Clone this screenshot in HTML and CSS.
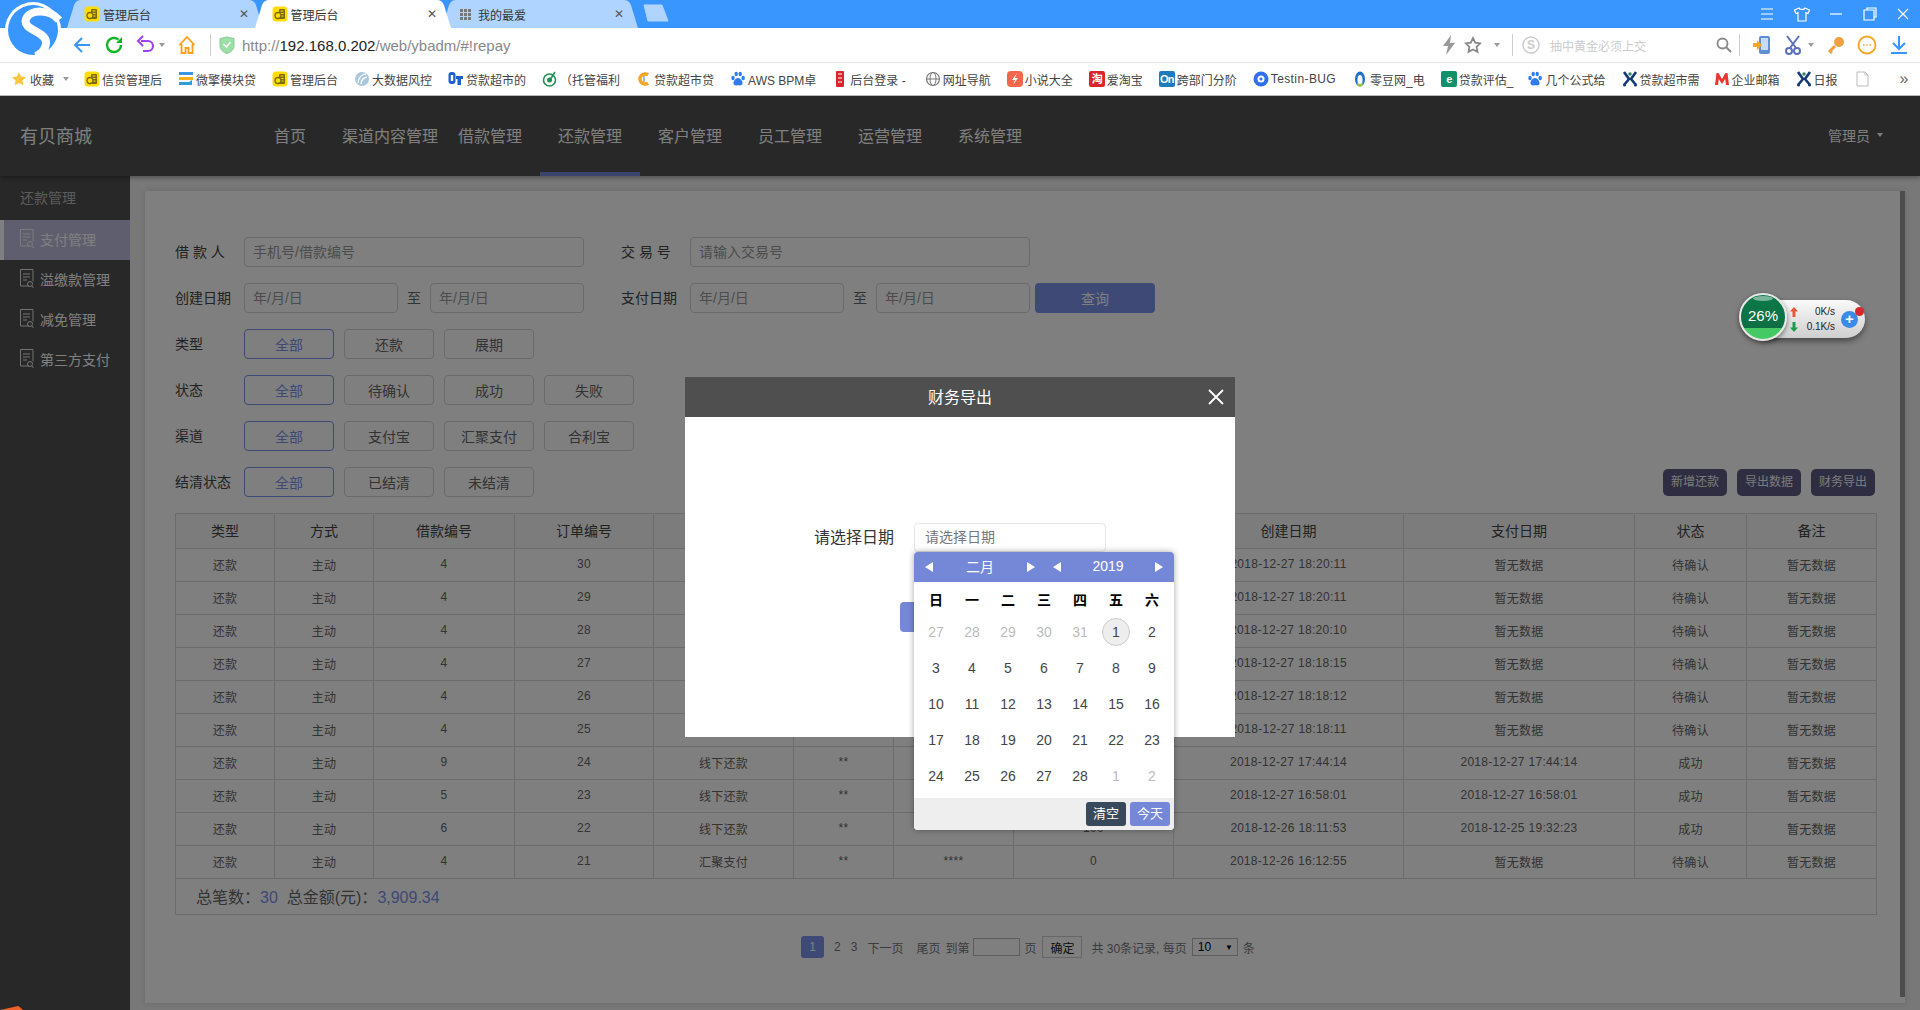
FILE: index.html
```html
<!DOCTYPE html>
<html lang="zh-CN">
<head>
	<meta charset="UTF-8">
	<title>管理后台</title>
	<link rel="stylesheet" href="styles.css">
</head>
<body>
	<svg class="defs" width="0" height="0">
		<symbol id="coin" viewBox="0 0 16 16"><rect x="0.5" y="0.5" width="15" height="15" rx="3.5" fill="#ffdd00"/><rect x="7" y="3" width="6" height="10" rx="1" fill="#7a6a10"/><path d="M8.5 5h3M8.5 7.5h3M8.5 10h3" stroke="#ffdd00"/><circle cx="6" cy="9.500" r="3" fill="#ffdd00" stroke="#7a6a10" stroke-width="1.300"/></symbol>
		<symbol id="paw" viewBox="0 0 16 16"><g fill="#2f7bf0"><ellipse cx="3" cy="7" rx="1.700" ry="2.200"/><ellipse cx="6.200" cy="3" rx="1.700" ry="2.200"/><ellipse cx="10.200" cy="3" rx="1.700" ry="2.200"/><ellipse cx="13.200" cy="7" rx="1.700" ry="2.200"/><path d="M8 7c-2.500 0-5 3.500-4.500 5.500C4 15 6.500 14.300 8 14.300s4 .7 4.500-1.800C13 10.500 10.500 7 8 7z"/></g></symbol>
		<symbol id="xman" viewBox="0 0 16 16"><path d="M2 1l5 7-5 6M14 1L9 8l5 6" fill="none" stroke="#123a78" stroke-width="2.600"/><circle cx="8" cy="3" r="1.800" fill="#3a8a6a"/><circle cx="2.500" cy="14" r="1.500" fill="#123a78"/><circle cx="13.500" cy="14" r="1.500" fill="#123a78"/></symbol>
		<symbol id="cai" viewBox="0 0 16 16"><path d="M3 1h8l3 3v11H3z" fill="#fff" stroke="#bbb"/><path d="M11 1v3h3" fill="none" stroke="#bbb"/></symbol>
		<symbol id="docs" viewBox="0 0 14 20"><path d="M9 17H.5V.5h12.500v12" fill="none" stroke="#fff" stroke-opacity=".85"/><path d="M3 5h7M3 8h7M3 11h4" stroke="#fff" stroke-opacity=".85"/><circle cx="10" cy="15" r="2.500" fill="none" stroke="#fff" stroke-opacity=".85"/><path d="M12 17l1.500 2" stroke="#fff" stroke-opacity=".85"/></symbol>
	</svg>

	<!-- 浏览器外框 -->
	<svg class="logo" width="60" height="58" viewBox="0 0 60 58">
		<circle cx="29" cy="29" r="28" fill="#fff"/>
		<circle cx="29" cy="29" r="25" fill="#3a96ff"/>
		<path d="M55 19C46 8 26 8 22 18c-4 12 22 12 20 25-1 6-6 10-10 12" fill="none" stroke="#fff" stroke-width="8"/>
	</svg>
	<div class="tabbar">
		<div class="tab">
			<svg class="tab-shape" viewBox="0 0 194 28" preserveAspectRatio="none"><path d="M0 28L7 5Q9 0 14 0H180Q185 0 187 5L194 28Z" fill="#aed4ff"/></svg>
			<svg class="tab-ic" width="16" height="16"><use href="#coin"/></svg><span class="tab-name">管理后台</span><span class="tab-x">✕</span>
		</div>
		<div class="tab tab-on">
			<svg class="tab-shape" viewBox="0 0 194 28" preserveAspectRatio="none"><path d="M0 28L7 5Q9 0 14 0H180Q185 0 187 5L194 28Z" fill="#fff"/></svg>
			<svg class="tab-ic" width="16" height="16"><use href="#coin"/></svg><span class="tab-name">管理后台</span><span class="tab-x">✕</span>
		</div>
		<div class="tab">
			<svg class="tab-shape" viewBox="0 0 194 28" preserveAspectRatio="none"><path d="M0 28L7 5Q9 0 14 0H180Q185 0 187 5L194 28Z" fill="#aed4ff"/></svg>
			<svg class="tab-ic" width="16" height="16" viewBox="0 0 16 16"><path d="M1 3h3v3H1zM5 3h3v3H5zM9 3h3v3H9zM1 7h3v3H1zM5 7h3v3H5zM9 7h3v3H9zM1 11h3v3H1zM5 11h3v3H5zM9 11h3v3H9z" fill="#777"/></svg><span class="tab-name">我的最爱</span><span class="tab-x">✕</span>
		</div>
		<svg class="tab-new" width="28" height="18" viewBox="0 0 28 18"><path d="M2 1h18l6 16H6z" fill="#aed4ff" stroke="#aed4ff" stroke-linejoin="round"/></svg>
		<div class="win-btns">
			<svg width="16" height="16" viewBox="0 0 16 16"><path d="M2 3h12M2 8h12M2 13h12" stroke="#fff" stroke-width="1.200"/></svg>
			<svg width="18" height="16" viewBox="0 0 18 16"><path d="M6 2L1.500 4 3 7.500l2-.8V15h8V6.700l2 .8L16.500 4 12 2c-.5 2-5.500 2-6 0z" fill="none" stroke="#fff" stroke-width="1.200"/></svg>
			<svg width="16" height="16" viewBox="0 0 16 16"><path d="M2 8h12" stroke="#fff" stroke-width="1.200"/></svg>
			<svg width="16" height="16" viewBox="0 0 16 16"><path d="M5 4V2h9v9h-2M2 4h10v10H2z" fill="none" stroke="#fff" stroke-width="1.200"/></svg>
			<svg width="16" height="16" viewBox="0 0 16 16"><path d="M3 3l10 10M13 3L3 13" stroke="#fff" stroke-width="1.200"/></svg>
		</div>
	</div>
	<div class="toolbar">
		<svg class="ic-back" width="20" height="20" viewBox="0 0 20 20"><path d="M10 3L3 10l7 7M3 10h15" fill="none" stroke="#3a96ff" stroke-width="2"/></svg>
		<svg class="ic-next" width="20" height="20" viewBox="0 0 20 20"><path d="M17 10a7 7 0 1 1-2.500-5.400" fill="none" stroke="#12b524" stroke-width="2.400"/><path d="M18 2v6h-6z" fill="#12b524"/></svg>
		<svg class="ic-next" width="20" height="20" viewBox="0 0 20 20"><path d="M5 6h7a5 5 0 0 1 0 10H7" fill="none" stroke="#a040f0" stroke-width="2.200"/><path d="M7 1L2 6l5 5" fill="none" stroke="#a040f0" stroke-width="2"/></svg>
		<span class="caret caret-undo"></span>
		<svg class="ic-home" width="20" height="20" viewBox="0 0 20 20"><path d="M2.500 10L10 2l7.500 8M4.500 9v9h4v-5h3v5h4V9" fill="none" stroke="#ff9d14" stroke-width="1.800"/></svg>
		<span class="tool-line line-url"></span>
		<svg class="ic-shield" width="16" height="18" viewBox="0 0 16 18"><path d="M1 2.500L8 1l7 1.500V10c0 4-4 6.500-7 7.500C5 16.500 1 14 1 10z" fill="#9adfa5" stroke="#8cc99a"/><path d="M4.500 8l3 3 4-5" fill="none" stroke="#fff" stroke-width="1.600"/></svg>
		<span class="url">http://<b>192.168.0.202</b>/web/ybadm/#!repay</span>
		<svg class="ic-bolt" width="14" height="20" viewBox="0 0 14 20"><path d="M9 0L1 11h5l-2 9 9-12H8z" fill="#999"/></svg>
		<svg class="ic-star" width="18" height="18" viewBox="0 0 18 18"><path d="M9 2l2.200 4.600 5 .7-3.600 3.500.9 5L9 13.400l-4.500 2.400.9-5L1.800 7.300l5-.7z" fill="none" stroke="#888" stroke-width="1.800"/></svg>
		<span class="caret caret-star"></span>
		<span class="tool-line line-search"></span>
		<svg class="ic-s" width="18" height="18" viewBox="0 0 18 18"><circle cx="9" cy="9" r="8" fill="none" stroke="#ccc" stroke-width="1.500"/><text x="9" y="13" font-size="12" text-anchor="middle" fill="#ccc" font-weight="700">S</text></svg>
		<span class="search-tip">抽中黄金必须上交</span>
		<svg class="ic-find" width="16" height="16" viewBox="0 0 16 16"><circle cx="6.500" cy="6.500" r="5" fill="none" stroke="#888" stroke-width="1.800"/><path d="M10 10l5 5" stroke="#888" stroke-width="2"/></svg>
		<span class="tool-line line-tools"></span>
		<svg class="ic-phone" width="18" height="18" viewBox="0 0 18 18"><rect x="6" y="0" width="11" height="18" rx="2" fill="#5f8fd0"/><rect x="8" y="2" width="7" height="12" fill="#c8dcf5"/><path d="M0 7h4V4l5 5-5 5v-3H0z" fill="#f5a623"/></svg>
		<svg class="ic-cut" width="16" height="20" viewBox="0 0 16 20"><path d="M2 1l9 12M14 1L5 13" stroke="#5a6fc0" stroke-width="2"/><circle cx="4" cy="16" r="3" fill="none" stroke="#5a6fc0" stroke-width="2"/><circle cx="12" cy="16" r="3" fill="none" stroke="#5a6fc0" stroke-width="2"/></svg>
		<span class="caret caret-cut"></span>
		<svg class="ic-key" width="18" height="18" viewBox="0 0 18 18"><circle cx="12" cy="6" r="5" fill="#f0a040"/><path d="M8 10l-6 6M3 15l2 2" stroke="#f0a040" stroke-width="3"/></svg>
		<svg class="ic-more" width="20" height="20" viewBox="0 0 20 20"><circle cx="10" cy="10" r="8.500" fill="none" stroke="#f5a623" stroke-width="1.800"/><path d="M6 10h1.500M9.300 10h1.500M12.600 10h1.500" stroke="#f5a623" stroke-width="1.600"/></svg>
		<svg class="ic-down" width="18" height="20" viewBox="0 0 18 20"><path d="M9 1v13M3 8l6 6 6-6M1 18h16" fill="none" stroke="#3a96ff" stroke-width="2"/></svg>
	</div>
	<div class="bookmarks">
		<span class="bm-fav"><svg width="14" height="14" viewBox="0 0 18 18"><path d="M9 0l2.700 5.800 6.300.8-4.600 4.300 1.200 6.100L9 14l-5.600 3 1.200-6.100L0 6.600l6.300-.8z" fill="#ffc53d"/></svg>收藏<span class="caret caret-fav"></span></span>
		<span class="bm"><svg width="16" height="16"><use href="#coin"/></svg>信贷管理后</span>
		<span class="bm"><svg width="16" height="16" viewBox="0 0 16 16"><path d="M1 1h14v3H1z" fill="#3a96e0"/><path d="M1 6h14v3H1z" fill="#f5b020"/><path d="M1 11h10l3-2v5H1z" fill="#2f9fd8"/></svg>微擎模块贷</span>
		<span class="bm"><svg width="16" height="16"><use href="#coin"/></svg>管理后台</span>
		<span class="bm"><svg width="16" height="16" viewBox="0 0 16 16"><circle cx="8" cy="8" r="7" fill="#a9c6df"/><path d="M4 12C4 7 8 3 12 3M7 13c0-4 2-6 6-7" fill="none" stroke="#fff" stroke-width="1.400"/></svg>大数据风控</span>
		<span class="bm"><svg width="16" height="16" viewBox="0 0 16 16"><rect x="0.500" y="1" width="7" height="12" rx="3" fill="#1c5fd0"/><path d="M8 5h7v3h-2v6H9.500V8H8z" fill="#1c5fd0"/><rect x="2.800" y="4" width="2.400" height="6" fill="#fff"/></svg>贷款超市的</span>
		<span class="bm"><svg width="16" height="16" viewBox="0 0 16 16"><circle cx="7.500" cy="9" r="6" fill="none" stroke="#1f8f4f" stroke-width="1.600"/><circle cx="7.500" cy="9" r="2.500" fill="#1f8f4f"/><path d="M8 9l5-8" stroke="#1f8f4f" stroke-width="1.500"/></svg>（托管福利</span>
		<span class="bm"><svg width="16" height="16" viewBox="0 0 16 16"><path d="M12 4a5 5 0 1 0 0 8" fill="none" stroke="#f5a623" stroke-width="3.600"/><path d="M8 5v6" stroke="#3a7ad0"/></svg>贷款超市贷</span>
		<span class="bm"><svg width="16" height="16"><use href="#paw"/></svg>AWS BPM卓</span>
		<span class="bm bm-wide"><svg width="16" height="16" viewBox="0 0 16 16"><rect x="4" y="0" width="8" height="16" rx="1" fill="#d8262c"/><path d="M6 3h4M6 7h4M6 11h4" stroke="#fff"/></svg>后台登录 -</span>
		<span class="bm"><svg width="16" height="16" viewBox="0 0 16 16"><circle cx="8" cy="8" r="6.500" fill="none" stroke="#777" stroke-width="1.200"/><ellipse cx="8" cy="8" rx="3" ry="6.500" fill="none" stroke="#777"/><path d="M1.500 8h13" stroke="#777"/></svg>网址导航</span>
		<span class="bm"><svg width="16" height="16" viewBox="0 0 16 16"><rect width="16" height="16" rx="4" fill="#f5664a"/><path d="M10 2L5 9h3l-2 5 5-7H8z" fill="#fff"/></svg>小说大全</span>
		<span class="bm"><span class="bm-chip chip-tao">淘</span>爱淘宝</span>
		<span class="bm"><span class="bm-chip chip-on">On</span>跨部门分阶</span>
		<span class="bm bm-latin"><svg width="16" height="16" viewBox="0 0 16 16"><circle cx="8" cy="8" r="7.500" fill="#2f6ff0"/><circle cx="8" cy="8" r="3.500" fill="#fff"/><circle cx="8" cy="8" r="1.500" fill="#2f6ff0"/></svg>Testin-BUG</span>
		<span class="bm"><svg width="16" height="16" viewBox="0 0 16 16"><ellipse cx="8" cy="8" rx="5" ry="7.500" fill="#1f6fd0"/><ellipse cx="8" cy="9" rx="2.500" ry="5" fill="#fff"/><path d="M8 16c-2-1-3-2-3-4 1 1 5 1 6 0 0 2-1 3-3 4z" fill="#9bc53d"/></svg>零豆网_电</span>
		<span class="bm bm-tight"><span class="bm-chip chip-eval">e</span>贷款评估_</span>
		<span class="bm"><svg width="16" height="16"><use href="#paw"/></svg>几个公式给</span>
		<span class="bm bm-tight"><svg width="16" height="16"><use href="#xman"/></svg>贷款超市需</span>
		<span class="bm"><svg width="16" height="16" viewBox="0 0 16 16"><path d="M1 14l1.500-12h2L8 8l3.500-6h2L15 14h-3l-.8-6L8 13 4.800 8 4 14z" fill="#e8352e"/></svg>企业邮箱</span>
		<span class="bm"><svg width="16" height="16"><use href="#xman"/></svg>日报</span>
		<span class="bm"><svg width="16" height="16"><use href="#cai"/></svg></span>
		<span class="bm-more">»</span>
	</div>

	<!-- 页面 -->
	<div class="app">
		<div class="topnav">
			<div class="brand">有贝商城</div>
			<ul class="nav">
				<li>首页</li>
				<li>渠道内容管理</li>
				<li>借款管理</li>
				<li class="on">还款管理</li>
				<li>客户管理</li>
				<li>员工管理</li>
				<li>运营管理</li>
				<li>系统管理</li>
			</ul>
			<div class="admin">管理员<span class="caret caret-admin"></span></div>
		</div>
		<div class="main">
			<div class="side">
				<div class="side-title">还款管理</div>
				<div class="side-item on"><svg width="14" height="20"><use href="#docs"/></svg>支付管理</div>
				<div class="side-item"><svg width="14" height="20"><use href="#docs"/></svg>溢缴款管理</div>
				<div class="side-item"><svg width="14" height="20"><use href="#docs"/></svg>减免管理</div>
				<div class="side-item"><svg width="14" height="20"><use href="#docs"/></svg>第三方支付</div>
			</div>
			<div class="card">
				<div class="card-in">
					<div class="row">
						<label class="lab">借 款 人</label>
						<input class="ipt ipt-long" placeholder="手机号/借款编号">
						<label class="lab lab-right">交 易 号</label>
						<input class="ipt ipt-long" placeholder="请输入交易号">
					</div>
					<div class="row">
						<label class="lab">创建日期</label>
						<input class="ipt ipt-date" placeholder="年/月/日">
						<span class="to">至</span>
						<input class="ipt ipt-date" placeholder="年/月/日">
						<label class="lab lab-right">支付日期</label>
						<input class="ipt ipt-date" placeholder="年/月/日">
						<span class="to">至</span>
						<input class="ipt ipt-date" placeholder="年/月/日">
						<button class="search">查询</button>
					</div>
					<div class="row">
						<label class="lab">类型</label>
						<span class="opt on">全部</span><span class="opt">还款</span><span class="opt">展期</span>
					</div>
					<div class="row">
						<label class="lab">状态</label>
						<span class="opt on">全部</span><span class="opt">待确认</span><span class="opt">成功</span><span class="opt">失败</span>
					</div>
					<div class="row">
						<label class="lab">渠道</label>
						<span class="opt on">全部</span><span class="opt">支付宝</span><span class="opt">汇聚支付</span><span class="opt">合利宝</span>
					</div>
					<div class="row">
						<label class="lab">结清状态</label>
						<span class="opt on">全部</span><span class="opt">已结清</span><span class="opt">未结清</span>
						<div class="acts">
							<span class="act">新增还款</span><span class="act">导出数据</span><span class="act">财务导出</span>
						</div>
					</div>
					<table class="list">
						<colgroup>
							<col class="c99"><col class="c99"><col class="c141"><col class="c139"><col class="c140"><col class="c100"><col class="c120"><col class="c160"><col class="c230"><col class="c231"><col class="c112"><col class="c130">
						</colgroup>
						<thead>
							<tr><th>类型</th><th>方式</th><th>借款编号</th><th>订单编号</th><th></th><th></th><th></th><th></th><th>创建日期</th><th>支付日期</th><th>状态</th><th>备注</th></tr>
						</thead>
						<tbody>
							<tr><td>还款</td><td>主动</td><td>4</td><td>30</td><td></td><td></td><td></td><td></td><td>2018-12-27 18:20:11</td><td>暂无数据</td><td>待确认</td><td>暂无数据</td></tr>
							<tr><td>还款</td><td>主动</td><td>4</td><td>29</td><td></td><td></td><td></td><td></td><td>2018-12-27 18:20:11</td><td>暂无数据</td><td>待确认</td><td>暂无数据</td></tr>
							<tr><td>还款</td><td>主动</td><td>4</td><td>28</td><td></td><td></td><td></td><td></td><td>2018-12-27 18:20:10</td><td>暂无数据</td><td>待确认</td><td>暂无数据</td></tr>
							<tr><td>还款</td><td>主动</td><td>4</td><td>27</td><td></td><td></td><td></td><td></td><td>2018-12-27 18:18:15</td><td>暂无数据</td><td>待确认</td><td>暂无数据</td></tr>
							<tr><td>还款</td><td>主动</td><td>4</td><td>26</td><td></td><td></td><td></td><td></td><td>2018-12-27 18:18:12</td><td>暂无数据</td><td>待确认</td><td>暂无数据</td></tr>
							<tr><td>还款</td><td>主动</td><td>4</td><td>25</td><td></td><td></td><td></td><td></td><td>2018-12-27 18:18:11</td><td>暂无数据</td><td>待确认</td><td>暂无数据</td></tr>
							<tr><td>还款</td><td>主动</td><td>9</td><td>24</td><td>线下还款</td><td>**</td><td></td><td></td><td>2018-12-27 17:44:14</td><td>2018-12-27 17:44:14</td><td>成功</td><td>暂无数据</td></tr>
							<tr><td>还款</td><td>主动</td><td>5</td><td>23</td><td>线下还款</td><td>**</td><td></td><td></td><td>2018-12-27 16:58:01</td><td>2018-12-27 16:58:01</td><td>成功</td><td>暂无数据</td></tr>
							<tr><td>还款</td><td>主动</td><td>6</td><td>22</td><td>线下还款</td><td>**</td><td></td><td>100</td><td>2018-12-26 18:11:53</td><td>2018-12-25 19:32:23</td><td>成功</td><td>暂无数据</td></tr>
							<tr><td>还款</td><td>主动</td><td>4</td><td>21</td><td>汇聚支付</td><td>**</td><td>****</td><td>0</td><td>2018-12-26 16:12:55</td><td>暂无数据</td><td>待确认</td><td>暂无数据</td></tr>
							<tr class="sum"><td colspan="12">总笔数：<em>30</em>&nbsp;&nbsp;总金额(元)：<em>3,909.34</em></td></tr>
						</tbody>
					</table>
					<div class="pager">
						<span class="pg-cur">1</span><span class="pg-2">2</span><span class="pg-3">3</span><span class="pg-next">下一页</span><span class="pg-last">尾页</span><span class="pg-go">到第</span><input class="pg-ipt"><span class="pg-unit">页</span><button class="pg-ok">确定</button><span class="pg-info">共 30条记录, 每页</span><div class="pg-sel">10<span class="pg-arrow">▼</span></div><span class="pg-unit">条</span>
					</div>
				</div>
				<div class="scroll"></div>
			</div>
		</div>

		<div class="mask"></div>
		<div class="modal">
			<div class="modal-head">财务导出<svg class="modal-x" width="16" height="16" viewBox="0 0 16 16"><path d="M1 1l14 14M15 1L1 15" stroke="#fff" stroke-width="1.800"/></svg></div>
			<div class="modal-row">
				<label class="modal-lab">请选择日期</label>
				<input class="modal-ipt" placeholder="请选择日期">
			</div>
			<div class="modal-ok"></div>
			<div class="cal">
				<div class="cal-head">
					<span class="tri-l"></span><span class="cal-val">二月</span><span class="tri-r"></span>
					<span class="tri-l"></span><span class="cal-val">2019</span><span class="tri-r"></span>
				</div>
				<div class="cal-week"><span>日</span><span>一</span><span>二</span><span>三</span><span>四</span><span>五</span><span>六</span></div>
				<div class="cal-days">
					<span class="off">27</span><span class="off">28</span><span class="off">29</span><span class="off">30</span><span class="off">31</span><span class="today">1</span><span>2</span>
					<span>3</span><span>4</span><span>5</span><span>6</span><span>7</span><span>8</span><span>9</span>
					<span>10</span><span>11</span><span>12</span><span>13</span><span>14</span><span>15</span><span>16</span>
					<span>17</span><span>18</span><span>19</span><span>20</span><span>21</span><span>22</span><span>23</span>
					<span>24</span><span>25</span><span>26</span><span>27</span><span>28</span><span class="off">1</span><span class="off">2</span>
				</div>
				<div class="cal-foot"><span class="cal-clear">清空</span><span class="cal-now">今天</span></div>
			</div>
		</div>
		<div class="wedge"></div>
	</div>

	<!-- 桌面悬浮球 -->
	<div class="ball">
		<div class="ball-pill">
			<div class="ball-arrows">
				<svg width="8" height="10" viewBox="0 0 8 10"><path d="M4 0l4 4.500H5.500V10h-3V4.500H0z" fill="#e8583a"/></svg>
				<svg width="8" height="10" viewBox="0 0 8 10"><path d="M4 10l4-4.500H5.500V0h-3v5.500H0z" fill="#1f9a50"/></svg>
			</div>
			<div class="ball-speed"><span>0K/s</span><span>0.1K/s</span></div>
			<div class="ball-plus">+</div>
			<div class="ball-dot"></div>
		</div>
		<div class="ball-round"><div class="ball-shine"></div><span class="ball-num">26%</span></div>
	</div>
</body>
</html>
```
FILE: styles.css
```css
*{
	margin: 0;
	padding: 0;
	box-sizing: border-box;
}
html,body{
	width: 1920px;
	height: 1010px;
	overflow: hidden;
}
body{
	position: relative;
	font-family: "Liberation Sans","Noto Sans CJK SC",sans-serif;
	font-size: 14px;
	color: #666;
	background-color: #fff;
}
ul{
	list-style: none;
}
.defs{
	position: absolute;
}
.caret{
	display: block;
	width: 0;
	height: 0;
	border-left: 3.5px solid transparent;
	border-right: 3.5px solid transparent;
	border-top: 4px solid #999;
}

/* browser chrome */
.logo{
	position: absolute;
	left: 4px;
	top: 1px;
	z-index: 5;
}
.tabbar{
	height: 28px;
	padding-left: 67px;
	background-color: #3a96ff;
	display: flex;
}
.tab{
	position: relative;
	width: 196px;
	height: 28px;
	margin-right: -8.5px;
	padding-left: 17px;
	display: flex;
	align-items: center;
	font-size: 12px;
	color: #333;
}
.tab-on{
	z-index: 1;
}
.tab-shape{
	position: absolute;
	left: 0;
	top: 0;
	width: 100%;
	height: 100%;
}
.tab-ic,.tab-name,.tab-x{
	position: relative;
}
.tab-name{
	margin-left: 3px;
}
.tab-x{
	margin-left: auto;
	margin-right: 14px;
	font-size: 12px;
	color: #555;
}
.tab-new{
	margin: 4px 0 0 12px;
}
.win-btns{
	margin-left: auto;
	width: 161px;
	padding: 6px 9px 0 0;
	display: flex;
	justify-content: space-between;
	height: 22px;
}
.toolbar{
	height: 34px;
	padding-left: 72px;
	display: flex;
	align-items: center;
	background-color: #fff;
}
.ic-next{
	margin-left: 12px;
}
.caret-undo{
	margin-left: 3px;
}
.ic-home{
	margin-left: 12px;
}
.tool-line{
	width: 1px;
	height: 22px;
	background-color: #ccc;
}
.line-url{
	margin-left: 13px;
}
.ic-shield{
	margin-left: 8px;
}
.url{
	margin-left: 7px;
	width: 1190px;
	padding-top: 1px;
	font-size: 15px;
	color: #888;
}
.url b{
	font-weight: normal;
	color: #222;
}
.ic-bolt{
	margin-left: 10px;
}
.ic-star{
	margin-left: 8px;
}
.caret-star{
	margin-left: 12px;
}
.line-search{
	margin-left: 12px;
}
.ic-s{
	margin-left: 9px;
}
.search-tip{
	margin-left: 10px;
	width: 166px;
	font-size: 12px;
	color: #ccc;
}
.ic-find{
	margin-left: 0;
}
.line-tools{
	margin-left: 7px;
}
.ic-phone{
	margin-left: 13px;
}
.ic-cut{
	margin-left: 14px;
}
.caret-cut{
	margin-left: 7px;
}
.ic-key{
	margin-left: 13px;
}
.ic-more{
	margin-left: 12px;
}
.ic-down{
	margin-left: 13px;
}
.bookmarks{
	height: 34px;
	padding-left: 12px;
	border-top: 1px solid #e6e6e6;
	border-bottom: 1px solid #bbb;
	display: flex;
	align-items: center;
	font-size: 12px;
	color: #444;
	white-space: nowrap;
	background-color: #fff;
}
.bm-fav{
	display: flex;
	align-items: center;
	width: 72px;
	gap: 4px;
}
.caret-fav{
	margin-left: 5px;
}
.bm{
	display: flex;
	align-items: center;
	gap: 2px;
	margin-right: 16px;
}
.bm-wide{
	margin-right: 19px;
}
.bm-tight{
	margin-right: 14px;
}
.bm-latin{
	letter-spacing: .4px;
}
.bm-chip{
	width: 16px;
	height: 16px;
	border-radius: 2px;
	font-size: 11px;
	line-height: 16px;
	text-align: center;
	color: #fff;
	font-weight: bold;
	letter-spacing: -1px;
}
.chip-tao{
	background-color: #d8262c;
}
.chip-on{
	background-color: #1f7ac0;
}
.chip-eval{
	background-color: #12906a;
}
.bm-more{
	margin-left: 14px;
	font-size: 16px;
	color: #666;
}

/* page */
.app{
	position: relative;
	height: 914px;
	overflow: hidden;
	background-color: #f0f0f0;
}
.topnav{
	height: 80px;
	display: flex;
	background-color: #505050;
	box-shadow: 0 2px 4px rgba(0,0,0,.3);
	position: relative;
	z-index: 1;
	color: #fff;
}
.brand{
	width: 240px;
	padding-left: 20px;
	font-size: 18px;
	line-height: 82px;
}
.nav{
	display: flex;
}
.nav>li{
	width: 100px;
	height: 80px;
	line-height: 82px;
	text-align: center;
	font-size: 16px;
}
.nav>.on{
	border-bottom: 4px solid #7588d8;
}
.admin{
	margin-left: auto;
	padding: 0 37px 2px 0;
	display: flex;
	align-items: center;
	gap: 7px;
	font-size: 14px;
}
.caret-admin{
	border-top-color: #fff;
}
.main{
	height: 834px;
	display: flex;
}
.side{
	width: 130px;
	background-color: #505050;
	color: #fff;
}
.side-title{
	height: 44px;
	padding: 14px 0 0 20px;
	font-size: 14px;
	line-height: 16px;
	color: #b8b8b8;
}
.side-item{
	height: 40px;
	padding: 0 0 2px 20px;
	display: flex;
	align-items: center;
	gap: 6px;
	font-size: 14px;
}
.side-item.on{
	background-color: #bfbddc;
	border-left: 4px solid #fff;
	padding-left: 16px;
}
.card{
	width: 1760px;
	height: 812px;
	margin: 15px 0 0 15px;
	background-color: #fff;
	box-shadow: 0 0 6px rgba(0,0,0,.12);
	display: flex;
}
.card-in{
	width: 1755px;
	padding: 46px 0 0 30px;
}
.scroll{
	width: 5px;
	height: 806px;
	background-color: #999;
}
.row{
	width: 1701px;
	height: 30px;
	margin-bottom: 16px;
	display: flex;
	align-items: center;
}
.lab{
	width: 69px;
	padding-bottom: 2px;
	color: #444;
}
.lab-right{
	margin-left: 37px;
}
.ipt{
	height: 30px;
	padding: 0 8px;
	border: 1px solid #d5d5d5;
	border-radius: 4px;
	font-family: inherit;
	font-size: 14px;
	color: #666;
	background-color: #fff;
}
.ipt::placeholder{
	color: #999;
}
.ipt-long{
	width: 340px;
}
.ipt-date{
	width: 154px;
}
.to{
	width: 32px;
	padding-bottom: 2px;
	text-align: center;
}
.search{
	width: 120px;
	height: 30px;
	margin-left: 5px;
	border: 0;
	border-radius: 4px;
	font-family: inherit;
	font-size: 14px;
	color: #fff;
	background-color: #7c92ec;
}
.opt{
	width: 90px;
	height: 30px;
	margin-right: 10px;
	border: 1px solid #d5d5d5;
	border-radius: 4px;
	line-height: 30px;
	text-align: center;
}
.opt.on{
	border-color: #7c92ec;
	color: #7c92ec;
}
.acts{
	margin-left: auto;
	margin-right: 1px;
	display: flex;
	gap: 10px;
}
.act{
	width: 64px;
	height: 27px;
	border-radius: 5px;
	line-height: 27px;
	text-align: center;
	font-size: 12px;
	color: #f5f5f5;
	background-color: #5c5a84;
}
.list{
	width: 1701px;
	border-collapse: collapse;
	table-layout: fixed;
	text-align: center;
	font-size: 12px;
}
.c99{width: 99px;}
.c100{width: 100px;}
.c112{width: 112px;}
.c120{width: 120px;}
.c130{width: 130px;}
.c139{width: 139px;}
.c140{width: 140px;}
.c141{width: 141px;}
.c160{width: 160px;}
.c230{width: 230px;}
.c231{width: 231px;}
.list th,.list td{
	border: 1px solid #d8d8d8;
}
.list th{
	height: 35px;
	padding-bottom: 2px;
	font-size: 14px;
	font-weight: normal;
	color: #444;
	background-color: #f8f8f8;
}
.list td{
	height: 33px;
	padding-bottom: 2px;
	letter-spacing: .3px;
}
.list .sum td{
	height: 36px;
	padding-left: 20px;
	text-align: left;
	font-size: 16px;
	letter-spacing: 0;
}
.sum em{
	font-style: normal;
	color: #7c92ec;
}
.pager{
	margin: 21px 0 0 626px;
	display: flex;
	align-items: center;
	height: 22px;
	font-size: 12px;
	color: #777;
}
.pg-cur{
	width: 23px;
	height: 22px;
	border-radius: 3px;
	line-height: 22px;
	text-align: center;
	color: #fff;
	background-color: #7c92ec;
}
.pg-2{
	margin-left: 10px;
}
.pg-3{
	margin-left: 10px;
}
.pg-next{
	margin-left: 10px;
}
.pg-last{
	margin-left: 13px;
}
.pg-go{
	margin-left: 5px;
}
.pg-ipt{
	width: 47px;
	height: 18px;
	margin: 0 4px;
	border: 1px solid #bbb;
	background-color: #fff;
}
.pg-ok{
	width: 40px;
	height: 22px;
	margin: 0 9px 0 6px;
	border: 1px solid #ccc;
	font-family: inherit;
	font-size: 12px;
	color: #222;
	background-color: #fff;
}
.pg-sel{
	width: 46px;
	height: 18px;
	margin: 0 5px;
	padding: 0 4px 0 5px;
	border: 1px solid #bbb;
	display: flex;
	justify-content: space-between;
	align-items: center;
	color: #003;
	background-color: #fff;
}
.pg-arrow{
	font-size: 8px;
	color: #000;
}
.mask{
	position: absolute;
	left: 0;
	top: 0;
	width: 100%;
	height: 100%;
	z-index: 2;
	background-color: rgba(0,0,0,.5);
}
.wedge{
	position: absolute;
	left: 0;
	bottom: 0;
	z-index: 3;
	width: 23px;
	height: 4px;
	background-color: #f0622a;
	clip-path: polygon(0 100%,80% 0,100% 100%);
}

/* dialog */
.modal{
	position: absolute;
	left: 685px;
	top: 281px;
	z-index: 3;
	width: 550px;
	height: 360px;
	background-color: #fff;
}
.modal-head{
	position: relative;
	height: 40px;
	line-height: 41px;
	text-align: center;
	font-size: 16px;
	color: #fff;
	background-color: #4f4f4f;
}
.modal-x{
	position: absolute;
	right: 11px;
	top: 12px;
}
.modal-row{
	margin-top: 106px;
	padding-left: 129px;
	display: flex;
	align-items: center;
}
.modal-lab{
	width: 100px;
	padding-bottom: 4px;
	font-size: 16px;
	color: #333;
}
.modal-ipt{
	width: 192px;
	height: 29px;
	padding: 0 10px 2px;
	border: 1px solid #e6e6e6;
	border-radius: 4px;
	font-family: inherit;
	font-size: 14px;
}
.modal-ipt::placeholder{
	color: #777;
}
.modal-ok{
	width: 120px;
	height: 30px;
	margin: 50px 0 0 215px;
	border-radius: 4px;
	background-color: #7588d8;
}
.cal{
	position: absolute;
	left: 229px;
	top: 175px;
	width: 260px;
	height: 278px;
	border-radius: 4px;
	overflow: hidden;
	background-color: #fff;
	box-shadow: 0 0 6px rgba(0,0,0,.35);
	color: #444;
}
.cal-head{
	height: 30px;
	padding: 0 8px 0 11px;
	display: flex;
	align-items: center;
	color: #fff;
	background-color: #7588d8;
}
.cal-val{
	width: 94px;
	padding-bottom: 2px;
	text-align: center;
}
.tri-l,.tri-r{
	width: 0;
	height: 0;
	border-top: 5px solid transparent;
	border-bottom: 5px solid transparent;
}
.tri-l{
	border-right: 8px solid #fff;
}
.tri-r{
	border-left: 8px solid #fff;
	margin-right: 18px;
}
.tri-r:last-child{
	margin-right: 0;
}
.cal-week,.cal-days{
	padding: 0 4px;
	display: grid;
	grid-template-columns: repeat(7,36px);
	text-align: center;
}
.cal-week{
	height: 32px;
	padding-top: 8px;
	font-weight: bold;
	color: #000;
	line-height: 20px;
}
.cal-days{
	grid-auto-rows: 36px;
	line-height: 36px;
	height: 184px;
}
.cal-days>.off{
	color: #bbb;
}
.cal-days>.today{
	width: 28px;
	height: 28px;
	margin: 4px;
	border: 1px solid #ccc;
	border-radius: 50%;
	line-height: 26px;
	background-color: #eee;
}
.cal-foot{
	height: 32px;
	padding: 4px;
	display: flex;
	justify-content: flex-end;
	gap: 4px;
	background-color: #eee;
}
.cal-clear,.cal-now{
	width: 40px;
	height: 24px;
	border-radius: 3px;
	line-height: 24px;
	text-align: center;
	font-size: 13px;
	color: #fff;
}
.cal-clear{
	background-color: #37495a;
}
.cal-now{
	background-color: #7588d8;
}

/* floating ball */
.ball{
	position: absolute;
	left: 1739px;
	top: 293px;
	z-index: 9;
	width: 126px;
	height: 48px;
}
.ball-round{
	position: absolute;
	left: 0;
	top: 0;
	width: 48px;
	height: 48px;
	border: 2px solid #e8e8e8;
	border-radius: 50%;
	overflow: hidden;
	background: linear-gradient(#0a7a48 0,#0f6e44 75%,#45c965 75%);
	box-shadow: 0 2px 5px rgba(0,0,0,.5);
}
.ball-shine{
	width: 20px;
	height: 5px;
	margin: 1px auto 0;
	border-radius: 50%;
	background-color: rgba(255,255,255,.45);
}
.ball-num{
	display: block;
	margin-top: 6px;
	text-align: center;
	font-size: 15px;
	color: #fff;
}
.ball-pill{
	position: absolute;
	left: 23px;
	top: 7px;
	width: 103px;
	height: 38px;
	padding-left: 28px;
	border-radius: 0 19px 19px 0;
	display: flex;
	align-items: center;
	background: linear-gradient(#fafafa,#cfcfcf);
	box-shadow: 0 3px 6px rgba(0,0,0,.45);
}
.ball-arrows{
	width: 8px;
	display: flex;
	flex-direction: column;
	gap: 5px;
}
.ball-speed{
	width: 37px;
	display: flex;
	flex-direction: column;
	align-items: flex-end;
	gap: 3px;
	font-size: 10px;
	line-height: 12px;
	color: #222;
}
.ball-plus{
	width: 17px;
	height: 17px;
	margin-left: 6px;
	border-radius: 50%;
	line-height: 16px;
	text-align: center;
	font-size: 15px;
	font-weight: bold;
	color: #fff;
	background-color: #3a8ae8;
}
.ball-dot{
	position: absolute;
	left: 93px;
	top: 7px;
	width: 9px;
	height: 9px;
	border-radius: 50%;
	background-color: #d8262c;
}
```
